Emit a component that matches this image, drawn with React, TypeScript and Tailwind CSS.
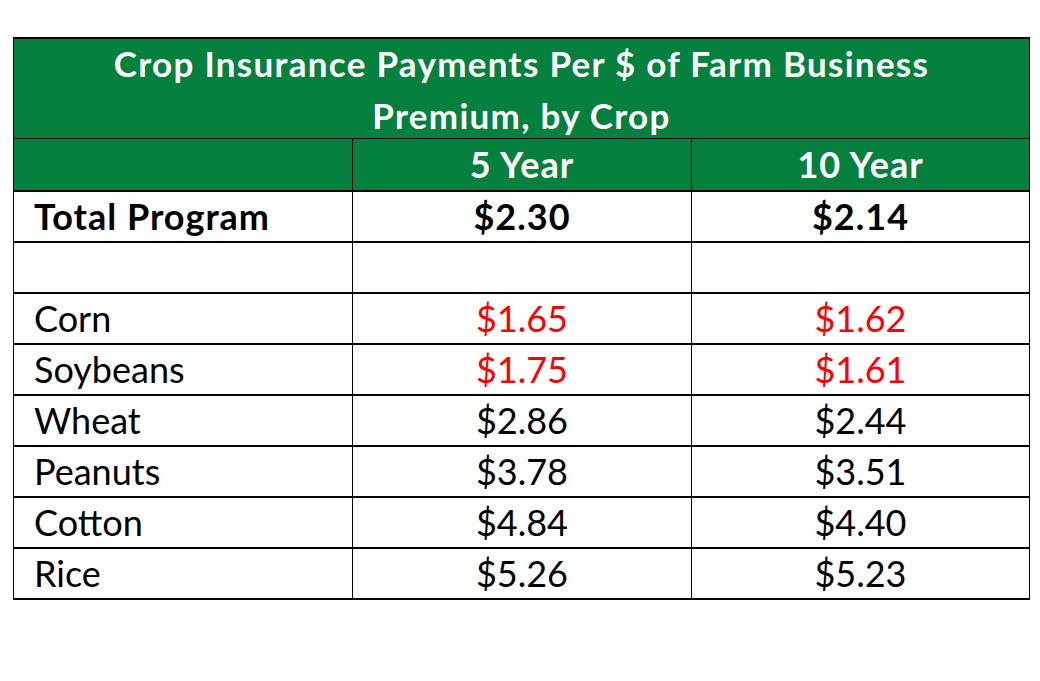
import React from 'react';

type Row = {
  label: string;
  five: string;
  ten: string;
  bold?: boolean;
  red?: boolean;
};

const rows: Row[] = [
  { label: 'Total Program', five: '$2.30', ten: '$2.14', bold: true },
  { label: '', five: '', ten: '' },
  { label: 'Corn', five: '$1.65', ten: '$1.62', red: true },
  { label: 'Soybeans', five: '$1.75', ten: '$1.61', red: true },
  { label: 'Wheat', five: '$2.86', ten: '$2.44' },
  { label: 'Peanuts', five: '$3.78', ten: '$3.51' },
  { label: 'Cotton', five: '$4.84', ten: '$4.40' },
  { label: 'Rice', five: '$5.26', ten: '$5.23' },
];

export default function App() {
  return (
    <div className="w-[1040px] h-[681px] bg-white pl-[13px] pt-[37px] font-['Lato',sans-serif] text-[36px]">
      <div className="w-[1017px] border-l border-r border-t-2 border-black">
        {/* title */}
        <div className="h-[100px] bg-[#06803f] border-b border-black flex items-center justify-center text-center text-white font-bold text-[35px] tracking-[1.3px] leading-[52px]">
          <div>
            Crop Insurance Payments Per $ of Farm Business
            <br />
            Premium, by Crop
          </div>
        </div>

        {/* column headers */}
        <div className="flex h-[53px] bg-[#06803f] border-b-2 border-black text-white font-bold tracking-[1px] leading-[51px]">
          <div className="w-[339px] border-r border-black" />
          <div className="w-[339px] border-r border-black text-center">5 Year</div>
          <div className="flex-1 text-center">10 Year</div>
        </div>

        {rows.map((r, i) => (
          <div key={i} className={`flex h-[51px] border-b-2 border-black leading-[49px] ${r.bold ? 'font-bold tracking-[1px]' : ''}`}>
            <div className="w-[339px] border-r border-black pl-[20px] text-black">{r.label}</div>
            <div className={`w-[339px] border-r border-black text-center ${r.red ? 'text-[#ff0000]' : 'text-black'}`}>{r.five}</div>
            <div className={`flex-1 text-center ${r.red ? 'text-[#ff0000]' : 'text-black'}`}>{r.ten}</div>
          </div>
        ))}
      </div>
    </div>
  );
}
